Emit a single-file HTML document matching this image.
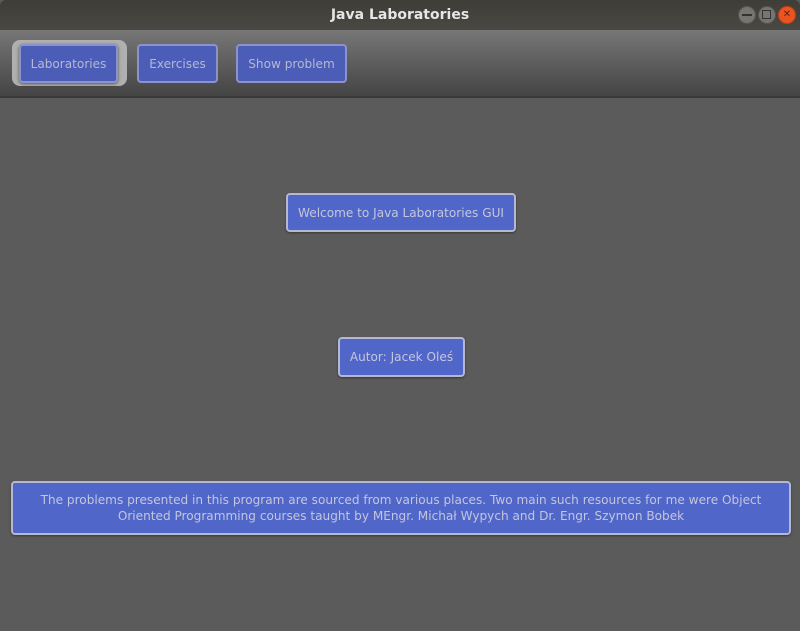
<!DOCTYPE html>
<html><head><style>
body{margin:0;width:800px;height:631px;overflow:hidden;background:#5b5b5b;font-family:"DejaVu Sans","Liberation Sans",sans-serif;position:relative}
.title{position:absolute;left:0;top:0;width:800px;height:30px;background:linear-gradient(#3f3d38,#4a4843);border-radius:6px 6px 0 0;color:#e6e6e6;font-weight:bold;font-size:14px;text-align:center;line-height:30px}
.tb{position:absolute;left:0;top:30px;width:800px;height:66px;background:linear-gradient(#777,#444);border-bottom:2px solid #3a3a3a}
.b{position:absolute;box-sizing:border-box;background:#4c5db8;border:2px solid #8b93c8;border-radius:4px;color:#b4b8d4;font-size:12.1px;display:flex;align-items:center;justify-content:center;text-align:center}
.c{background:#5066c8;border-color:#b6b8d0;color:#c4c6dc;box-shadow:0 1px 2px rgba(0,0,0,.4)}
.glow{position:absolute;left:12px;top:40px;width:115px;height:46px;border-radius:8px;background:#b0b0b0}
.wb{position:absolute;top:6px;width:16px;height:16px;border-radius:50%;background:#77756f;border:1px solid #555}
</style></head><body>
<div class="title">Java Laboratories</div>
<div class="wb" style="left:738px"></div><div class="wb" style="left:758px"></div>
<div class="wb" style="left:778px;background:#e95420;border-color:#c04010"></div>
<div style="position:absolute;left:742px;top:14px;width:10px;height:2px;background:#333"></div>
<div style="position:absolute;left:762px;top:10px;width:7px;height:7px;border:1px solid #333"></div>
<div style="position:absolute;left:778px;top:6px;width:18px;height:18px;color:#522;font-size:10px;line-height:18px;text-align:center">✕</div>
<div class="tb"></div>
<div class="glow"></div>
<div class="b" style="left:19px;top:44px;width:99px;height:39px;box-shadow:0 1px 3px rgba(0,0,0,.5)">Laboratories</div>
<div class="b" style="left:137px;top:44px;width:81px;height:39px">Exercises</div>
<div class="b" style="left:236px;top:44px;width:111px;height:39px">Show problem</div>
<div class="b c" style="left:286px;top:193px;width:230px;height:39px">Welcome to Java Laboratories GUI</div>
<div class="b c" style="left:338px;top:337px;width:127px;height:40px">Autor: Jacek Oleś</div>
<div class="b c" style="left:11px;top:481px;width:780px;height:54px;line-height:16px">The problems presented in this program are sourced from various places. Two main such resources for me were Object<br>Oriented Programming courses taught by MEngr. Michał Wypych and Dr. Engr. Szymon Bobek</div>
</body></html>
